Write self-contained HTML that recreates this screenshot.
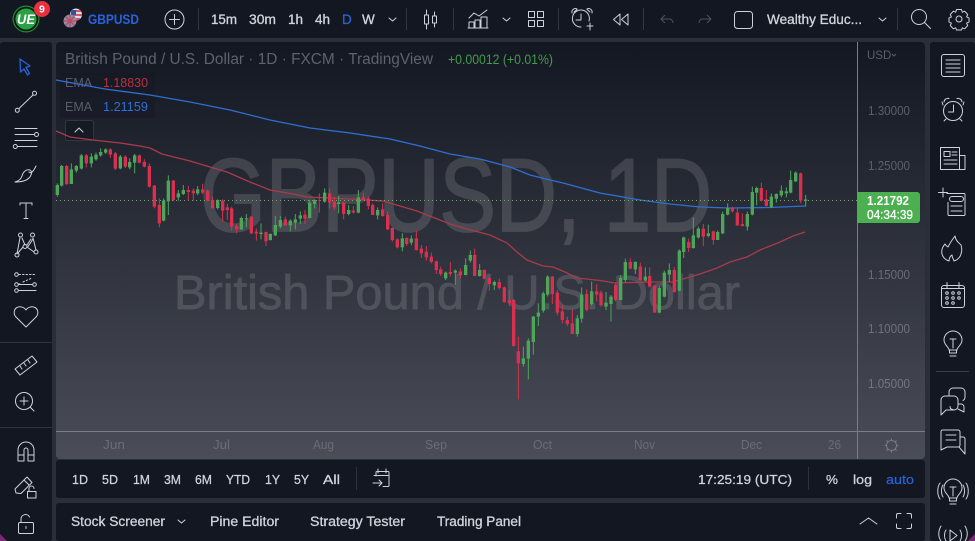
<!DOCTYPE html>
<html><head><meta charset="utf-8"><title>GBPUSD</title>
<style>
html,body{margin:0;padding:0;background:#2a2e39;width:975px;height:541px;overflow:hidden}
svg{display:block;font-family:"Liberation Sans",sans-serif}
.i{fill:none;stroke:#cfd2da;stroke-width:1;stroke-linecap:round;stroke-linejoin:round}
.t{fill:#d1d4dc;font-size:13.5px;stroke:#d1d4dc;stroke-width:.3}
.b{fill:#d1d4dc;font-size:13px;stroke:#d1d4dc;stroke-width:.25}
.p{fill:#5c5f69;font-size:12.5px}
.x{fill:#6a6d76;font-size:12.5px}
</style></head><body>
<svg width="975" height="541" viewBox="0 0 975 541" xmlns="http://www.w3.org/2000/svg">
<defs><linearGradient id="g" x1="0" y1="42" x2="0" y2="459" gradientUnits="userSpaceOnUse"><stop offset="0" stop-color="#131722"/><stop offset="1" stop-color="#4a4d57"/></linearGradient></defs>
<rect width="975" height="541" fill="#2a2e39"/>
<rect width="975" height="38" fill="#131722"/>
<rect x="0" y="42" width="52" height="499" rx="3" fill="#131722"/>
<rect x="930" y="42" width="45" height="499" rx="3" fill="#131722"/>
<rect x="56" y="42" width="869" height="417" rx="4" fill="url(#g)"/>
<rect x="56" y="460" width="869" height="38" rx="3" fill="#131722"/>
<rect x="56" y="503" width="869" height="38" rx="3" fill="#131722"/>

<!-- watermark -->
<g opacity=".13" fill="#fff" stroke="#fff">
<text x="200" y="231" font-size="104" stroke-width="1.800" textLength="512" lengthAdjust="spacingAndGlyphs">GBPUSD, 1D</text>
<text x="174" y="309" font-size="48" stroke-width=".8" textLength="566" lengthAdjust="spacingAndGlyphs">British Pound / U.S. Dollar</text>
</g>

<!-- legend -->
<text x="65" y="64" font-size="15.500" fill="#5f626c" textLength="368" lengthAdjust="spacingAndGlyphs">British Pound / U.S. Dollar · 1D · FXCM · TradingView</text>
<text x="448" y="64" font-size="13.500" fill="#44994c" textLength="105" lengthAdjust="spacingAndGlyphs">+0.00012 (+0.01%)</text>
<rect x="60" y="73" width="95" height="45" fill="#131722" fill-opacity=".35"/>
<text x="65" y="87" font-size="12.500" fill="#5a5d67">EMA</text>
<text x="103" y="87" font-size="13" fill="#b8303f" textLength="45" lengthAdjust="spacingAndGlyphs">1.18830</text>
<text x="65" y="111" font-size="12.500" fill="#5a5d67">EMA</text>
<text x="103" y="111" font-size="13" fill="#2f6fd0" textLength="45" lengthAdjust="spacingAndGlyphs">1.21159</text>
<rect x="65.500" y="120.500" width="28" height="20" rx="2" fill="#161a25" stroke="#33363f"/>
<path class="i" d="M75 132l4-4 4 4"/>

<!-- EMA lines -->
<path fill="none" stroke="#2f6fd0" stroke-width="1.300" d="M56 80L105 89L150 95L190 102L230 110L270 120L310 128L350 133L390 139L420 146L450 154L480 159L510 167L530 175L550 180L563 183L600 193L640 200L670 204L700 207L730 208L770 207.500L805 206"/>
<path fill="none" stroke="#a93a4a" stroke-width="1.300" d="M56 131L70 137L93 140L120 143L140 146L150 148L162 154L190 161L210 167L227 172L250 182L270 190L293 194L307 197L330 198L350 199L383 201L417 211L450 224L467 229L490 235L507 243L517 252L527 260L543 266L553 267L565 272L577 278L600 280.500L615 283L650 282L672 282L680 280L700 274L717 268L730 262L747 257L760 250L780 242L793 236L805 232"/>
<path stroke="#76a86a" stroke-width="1" stroke-dasharray="1 3" d="M56 200.500H857"/>

<!-- candles: coordinates in 3x crop space -->
<g fill="none">
<g transform="translate(50 130) scale(.33333)">
<path stroke="#4ca559" stroke-width="3" d="M22 160V200M35 105V170M64 100V162M79 105V128M94 72V118M124 70V112M138 68V92M152 55V80M167 55V72M211 75V118M239 85V118M254 72V130M341 205V274M355 136V255M385 180V212M400 165V195M443 168V195M503 208V238M574 260V300M589 252V292M633 280V328M661 310V332M676 258V318M691 258V295M721 268V304M736 252V298M751 244V282M779 210V265M794 208V235M824 175V218M866 198V250M896 225V256"/>
<path stroke="#4ca559" stroke-width="10" d="M22 165V195M35 108V167M64 118V162M79 108V122M94 76V116M124 80V100M138 74V88M152 66V76M167 58V68M211 80V115M239 96V112M254 76V98M341 212V272M355 152V214M385 190V202M400 180V192M443 178V190M503 210V234M574 264V298M589 265V268M633 308V312M661 312V330M676 285V316M691 270V290M721 272V286M736 268V278M751 256V266M779 218V264M794 210V222M824 188V215M866 218V222M896 240V252"/>
<path stroke="#d9304f" stroke-width="3" d="M50 105V165M109 72V112M181 55V84M196 66V120M226 76V114M268 74V100M283 88V112M298 100V172M313 165V235M328 205V292M370 150V214M415 168V212M430 175V212M458 162V192M473 178V214M488 200V235M518 208V275M532 222V270M545 230V302M560 282V310M604 258V312M619 296V332M648 305V348M706 260V288M765 240V282M808 190V248M839 175V235M853 200V240M881 215V268"/>
<path stroke="#d9304f" stroke-width="10" d="M50 108V162M109 76V100M181 58V74M196 70V116M226 80V110M268 76V98M283 96V110M298 108V170M313 167V230M328 225V280M370 152V210M415 180V186M430 182V190M458 178V188M473 182V212M488 210V235M518 212V242M532 232V240M545 235V290M560 288V298M604 260V310M619 305V310M648 306V334M706 268V286M765 254V266M808 210V212M839 190V218M853 214V232M881 218V252"/>
</g>
<g transform="translate(350 170) scale(.33333)">
<path stroke="#4ca559" stroke-width="3" d="M25 60V130M83 112V148M157 190V244M184 196V225M287 305V330M316 298V345M347 265V316M361 242V278M389 282V320M433 332V360M520 530V590M535 505V628M550 438V554M565 400V468M580 365V428M593 316V380M682 435V500M695 352V458M725 335V406"/>
<path stroke="#4ca559" stroke-width="10" d="M25 82V128M83 120V136M157 205V232M184 206V218M287 308V325M316 302V308M347 285V315M361 255V272M389 300V318M433 336V346M520 565V582M535 512V566M550 440V516M565 428V440M580 370V422M593 320V374M682 445V492M695 374V446M725 364V402"/>
<path stroke="#d9304f" stroke-width="3" d="M10 108V130M40 68V92M55 80V118M68 100V135M98 100V140M113 125V180M127 172V215M142 205V235M170 202V228M199 182V242M214 225V264M229 228V272M244 248V280M259 272V312M272 290V318M301 276V320M331 295V326M374 236V318M403 298V328M418 316V362M448 326V358M463 350V398M478 358V408M491 388V530M505 500V688M607 318V402M622 360V436M637 405V460M652 440V468M667 418V492M710 358V424M740 342V394"/>
<path stroke="#d9304f" stroke-width="10" d="M10 122V128M40 82V90M55 85V108M68 105V135M98 118V138M113 135V178M127 174V210M142 208V232M170 204V222M199 205V240M214 236V250M229 245V262M244 260V276M259 274V300M272 298V312M301 306V312M331 304V316M374 255V318M403 300V326M418 324V342M448 336V354M463 352V396M478 390V400M491 390V528M505 544V580M607 320V372M622 368V428M637 424V450M652 450V462M667 460V492M710 372V420M740 364V374"/>
</g>
<g transform="translate(600 160) scale(.33333)">
<path stroke="#4ca559" stroke-width="3" d="M18 396V450M33 405V485M62 345V420M76 296V366M106 304V342M136 322V364M178 380V460M193 332V412M208 310V366M238 268V394M251 230V294M280 172V266M295 200V236M325 194V232M353 212V240M368 155V222M383 130V166M442 155V212M457 80V166M470 80V136M514 100V144M529 100V128M544 76V112M559 82V112M572 32V100M587 34V66M617 105V140"/>
<path stroke="#4ca559" stroke-width="10" d="M18 428V440M33 410V432M62 354V420M76 306V360M106 306V328M136 350V362M178 384V458M193 338V410M208 330V344M238 272V392M251 232V276M280 226V264M295 206V232M325 220V228M353 216V240M368 162V220M383 144V164M442 162V200M457 96V164M470 84V98M514 110V142M529 102V116M544 92V106M559 94V100M572 60V98M587 38V64"/>
<path stroke="#4ca559" stroke-width="4" d="M612 120.500H622"/>
<path stroke="#d9304f" stroke-width="3" d="M3 392V440M47 368V424M91 295V328M121 308V362M149 322V382M164 376V458M223 322V398M266 236V276M310 192V258M340 212V254M397 140V158M412 142V198M427 160V200M484 68V124M499 90V140M602 38V130"/>
<path stroke="#d9304f" stroke-width="10" d="M3 398V436M47 375V420M91 306V326M121 320V360M149 348V380M164 378V458M223 330V396M266 246V264M310 206V230M340 214V240M397 144V154M412 158V196M427 192V198M484 84V122M499 118V138M602 40V122"/>
</g>
</g>

<!-- axes -->
<path stroke="#7a7d86" d="M857.500 42V459M56 431.500H925"/>
<text class="p" x="868" y="115" textLength="42" lengthAdjust="spacingAndGlyphs">1.30000</text>
<text class="p" x="868" y="170" textLength="42" lengthAdjust="spacingAndGlyphs">1.25000</text>
<text class="p" x="868" y="279" textLength="42" lengthAdjust="spacingAndGlyphs" style="fill:#696c75">1.15000</text>
<text class="p" x="868" y="333" textLength="42" lengthAdjust="spacingAndGlyphs" style="fill:#6e7179">1.10000</text>
<text class="p" x="868" y="388" textLength="42" lengthAdjust="spacingAndGlyphs" style="fill:#73767e">1.05000</text>
<text x="867" y="59" font-size="11.500" fill="#5c5f69">USD</text><path fill="none" stroke="#5c5f69" d="M892 54l2 2 2-2"/>
<path d="M857 192H917a3 3 0 0 1 3 3V220a3 3 0 0 1-3 3H857Z" fill="#4caf50"/>
<text x="867" y="205" font-size="12.500" font-weight="bold" fill="#fff" textLength="42" lengthAdjust="spacingAndGlyphs">1.21792</text>
<text x="867" y="219" font-size="12.500" fill="#fff" stroke="#fff" stroke-width=".3" textLength="46" lengthAdjust="spacingAndGlyphs">04:34:39</text>
<g class="x"><text x="103" y="449" textLength="22" lengthAdjust="spacingAndGlyphs">Jun</text><text x="213" y="449" textLength="17" lengthAdjust="spacingAndGlyphs">Jul</text><text x="313" y="449" textLength="21" lengthAdjust="spacingAndGlyphs">Aug</text><text x="425" y="449" textLength="22" lengthAdjust="spacingAndGlyphs">Sep</text><text x="533" y="449" textLength="19" lengthAdjust="spacingAndGlyphs">Oct</text><text x="634" y="449" textLength="21" lengthAdjust="spacingAndGlyphs">Nov</text><text x="741" y="449" textLength="21" lengthAdjust="spacingAndGlyphs">Dec</text><text x="828" y="449" textLength="13" lengthAdjust="spacingAndGlyphs">26</text></g>
<g fill="none" stroke="#787b84"><circle cx="891.500" cy="445.500" r="5"/><path d="M891.500 438.500v2M891.500 450.500v2M884.500 445.500h2M896.500 445.500h2M886.500 440.500l1.500 1.500M895 449l1.500 1.500M886.500 450.500l1.500-1.500M895 442l1.500-1.500"/></g>

<!-- logo -->
<circle cx="26" cy="19" r="13.500" fill="#1f8a3b"/><circle cx="26" cy="19" r="12.300" fill="#0f1a14"/><circle cx="26" cy="19" r="10.500" fill="#2aa144"/>
<text x="17" y="24" font-size="13.500" font-weight="bold" font-style="italic" fill="#fff" textLength="18" lengthAdjust="spacingAndGlyphs">UE</text>
<circle cx="42" cy="9" r="8" fill="#e8303f"/><text x="39" y="12.500" font-size="10.500" font-weight="bold" fill="#fff">9</text>
<!-- flags -->
<circle cx="76" cy="14.500" r="6" fill="#d8dce6"/><path d="M71 11H81M70 15H82M71 19H80" stroke="#c8303f" stroke-width="1.500"/><path d="M71 10h5v5h-5z" fill="#2c55a8"/>
<circle cx="70" cy="21" r="6.500" fill="#8a8fa8"/><path d="M64 21H76.500M70 15V27.500M65.500 16.500l9 9M74.500 16.500l-9 9" stroke="#c24a5c" stroke-width="1.300"/>
<text x="88" y="24" font-size="14" font-weight="bold" fill="#2962d8" textLength="51" lengthAdjust="spacingAndGlyphs">GBPUSD</text>

<!-- top bar -->
<circle class="i" cx="174.500" cy="19.500" r="9.500"/><path class="i" d="M174.500 14.500v10M169.500 19.500h10"/>
<path stroke="#333742" d="M198.500 8v22M406.500 8v22M453.500 8v22M558.500 8v22M643.500 8v22M897.500 8v22"/>
<text class="t" x="211" y="24" textLength="26" lengthAdjust="spacingAndGlyphs">15m</text><text class="t" x="249" y="24" textLength="27" lengthAdjust="spacingAndGlyphs">30m</text><text class="t" x="288" y="24" textLength="15" lengthAdjust="spacingAndGlyphs">1h</text><text class="t" x="315" y="24" textLength="15" lengthAdjust="spacingAndGlyphs">4h</text>
<text class="t" x="342" y="24" style="fill:#2962d8;stroke:#2962d8">D</text><text class="t" x="362" y="24">W</text>
<path class="i" d="M389 18l3.500 3 3.500-3M503 18l3.500 3 3.500-3M879 18l3.500 3 3.500-3"/>
<path class="i" d="M426.500 10v5M426.500 24v5M424.500 15h4v9h-4zM434.500 12v4M434.500 23v4M432.500 16h4v7h-4z" />
<path class="i" d="M469 18l5-5 5 3 8-6M469 28v-6h5v6M475 28v-8h5v8M481 28v-11h6v11M468 28h20"/>
<path class="i" d="M528.500 11.500h6v6h-6zM537.500 11.500h6v6h-6zM528.500 20.500h6v6h-6zM537.500 20.500h6v6h-6z"/>
<path class="i" d="M589 21a8.500 8.500 0 1 0-8 6M581 14v6h-5M574 12l3-2.500M590 12l-3-2.500M572 13a3.500 3.500 0 0 1 5-4M592 13a3.500 3.500 0 0 0-5-4M587 26h6M590 23v7"/>
<path class="i" d="M620 14l-6.500 5.500 6.500 5.500zM628 14l-6.500 5.500 6.500 5.500z"/>
<path fill="none" stroke="#4e525c" d="M665 15l-4 4 4 4M661 19h9a4 4 0 0 1 3 4M707 15l4 4-4 4M711 19h-9a4 4 0 0 0-3 4"/>
<rect class="i" x="734.500" y="11.500" width="18" height="17" rx="3"/>
<text class="t" x="767" y="24" textLength="95" lengthAdjust="spacingAndGlyphs">Wealthy Educ...</text>
<circle class="i" cx="919" cy="17" r="7.500"/><path class="i" d="M924.500 22.500l6 6"/>
<circle class="i" cx="959" cy="19" r="3"/><path class="i" d="M956.500 9.500h5l.8 2.700 2.400-1 3 3.300-1.100 2.400 2.400 1v4.200l-2.400 1 1.100 2.400-3 3.300-2.400-1-.8 2.200h-5l-.8-2.200-2.400 1-3-3.300 1.100-2.400-2.400-1v-4.200l2.400-1-1.100-2.400 3-3.300 2.400 1z"/>

<!-- left toolbar -->
<path fill="none" stroke="#2962d8" stroke-width="1.300" stroke-linejoin="round" d="M20 59l10 7-4 1.500 3.500 6-2 1.500-3.500-6-3.500 3z"/>
<circle class="i" cx="34.500" cy="93.300" r="2"/><circle class="i" cx="17.300" cy="110.300" r="2"/><path class="i" d="M33 95L19 108.500"/>
<path class="i" d="M15 128.500H37M15 134.500H34.500M15 140.500H37M17.500 146.500H37"/><circle class="i" cx="36.500" cy="134.500" r="2"/><circle class="i" cx="15.300" cy="146.500" r="2"/>
<path class="i" d="M15 182c4-1 6-3 7-6 1-4 4-7 8-6 3 2 1 6-1 8-3 3-8 4-14 4zM29 172c2 2 4 0 7-6"/>
<path class="i" d="M20 203h12M26 203v15M24 218.500h4M20 203v2M32 203v2"/>
<path class="i" d="M20 237.500L17 254M22 238L25 245M31 239L27 245M33 238L36 250M28 246.500L33 239M23 247L18 253M27 247L34 252"/><circle class="i" cx="20.500" cy="235" r="2"/><circle class="i" cx="32.500" cy="235" r="2"/><circle class="i" cx="25" cy="246.500" r="2"/><circle class="i" cx="17" cy="255" r="2"/><circle class="i" cx="36" cy="252" r="2"/>
<circle class="i" cx="16.500" cy="274.500" r="1.800"/><circle class="i" cx="16.500" cy="284.500" r="1.800"/><circle class="i" cx="16.500" cy="290.500" r="1.800"/><circle class="i" cx="34.500" cy="284.500" r="1.800"/>
<path class="i" d="M19 274.500H36M19 284h1M23 282l9-4" stroke-dasharray="1.500 2"/><path class="i" d="M19 290.500H36M19 284.500H32"/>
<path class="i" d="M26 327l-10-10c-3-3-2-8 1-9.500 3-1.500 7-.5 9 2.500 2-3 6-4 9-2.500 3 1.500 4 6.500 1 9.500z"/>
<path stroke="#2e323d" d="M0 342.500H52M0 427.500H52"/>
<path class="i" d="M15 369l17-13 5 6-17 13zM20 366l2 3M24 363l2 3M28 360l2 3"/>
<circle class="i" cx="24" cy="401" r="8.500"/><path class="i" d="M24 397v8M20 401h8M30 407l4 4"/>
<path class="i" d="M18 461v-11a8 8 0 0 1 16 0v11h-6v-11a2 2 0 0 0-4 0v11zM18 455h6M28 455h6"/>
<path class="i" d="M15 489l1 4 5 .5 11-11-5-5.500zM24 480l5 5"/><rect class="i" x="27.500" y="491.500" width="8.500" height="6.500" fill="#131722"/><path class="i" d="M29 491v-2.500a2.500 2.500 0 0 1 5 0"/>
<rect class="i" x="18.500" y="522.500" width="15" height="11" rx="1.500"/><path class="i" d="M21 522v-3a4.500 4.500 0 0 1 8.500-2M26 526.500v2"/>

<!-- right toolbar -->
<rect class="i" x="941.500" y="54.500" width="23" height="22" rx="2.500"/><path class="i" d="M946 60h14M946 64h14M946 68h14M946 72h14"/>
<circle class="i" cx="953" cy="111" r="9.500"/><path class="i" d="M953.500 105v7h-5M944 102a4 4 0 0 1 5-3.500M962 102a4 4 0 0 0-5-3.500M946 119l-2 2M960 119l2 2M943 105l-1-3M963 105l1-3"/>
<path class="i" d="M940.500 147.500h19v22h-19zM959.500 155.500h5.500v14h-5.500zM944 151.500h6v5h-6zM952 152h5M952 155h5M944 160h13M944 164h13"/>
<path class="i" d="M947 193.500h17a1 1 0 0 1 1 1v20a1 1 0 0 1-1 1h-15a1 1 0 0 1-1-1v-12M952 196.500h9a1.500 1.500 0 0 1 0 5h-9a1.500 1.500 0 0 1 0-5zM951 206h11M951 211h11M943 188v9M938.500 192.500h9"/>
<path class="i" d="M955 236c1 5 3 6 6 9 1 3 1 6 0 9-1 4-4 6-7 7-1-3-2-4-2-6-2 1-3 4-3 6-3-1-6-3-7-7-1-4 1-8 3-10 1 2 2 2 3 3 2-4 4-7 7-11z"/>
<rect class="i" x="941.500" y="285.500" width="23" height="22" rx="2.500"/><path class="i" d="M947 282.500v6M959 282.500v6M941.500 288.500h23"/><g class="i"><circle cx="947" cy="293" r="1.300"/><circle cx="953" cy="293" r="1.300"/><circle cx="959" cy="293" r="1.300"/><circle cx="947" cy="298" r="1.300"/><circle cx="953" cy="298" r="1.300"/><circle cx="959" cy="298" r="1.300"/><circle cx="947" cy="303" r="1.300"/><circle cx="953" cy="303" r="1.300"/></g>
<path class="i" d="M949 350c0-3-5-5-5-10a9 9 0 0 1 18 0c0 5-5 7-5 10zM949.500 350v3h7v-3M950 356h6M950 339h6M953 339v9"/>
<path stroke="#3a3e49" d="M936 371.500H969"/>
<path class="i" d="M941 415V400a4 4 0 0 1 4-4h9a4 4 0 0 1 4 4v6a4 4 0 0 1-4 4h-8zM949 396v-4a4 4 0 0 1 4-4h8a4 4 0 0 1 4 4v5a4 4 0 0 1-2 3.500M950 406.500c0 2 1 3 3 3M958 404h3a3 3 0 0 1 3 3v5l-6-3"/>
<path class="i" d="M942 430h16a2 2 0 0 1 2 2v13a2 2 0 0 1-2 2h-11l-6 3v-18a2 2 0 0 1 1-2zM946 435h10M946 440h10M960 437h3a2 2 0 0 1 2 2v15l-6-7"/>
<path class="i" d="M949 498c0-3-5-5-5-10a9 9 0 0 1 18 0c0 5-5 7-5 10zM949.500 498v3h7v-3M950 504h6M950 487h6M953 487v9M940 483c-3 4-3 12 0 16M943 485c-2 3-2 9 0 12M966 483c3 4 3 12 0 16M963 485c2 3 2 9 0 12"/>
<path class="i" d="M950 530l7 5.500-7 5.500zM946 530c-2 3-2 8 0 11M960 530c2 3 2 8 0 11M941 526c-3 5-3 11 0 15M965 526c3 5 3 11 0 15"/>
<path d="M968 541l7-7v7z" fill="#7c2a78"/><path d="M0 534l7 7H0z" fill="#7c2a78"/>

<!-- range bar -->
<g class="b"><text x="72" y="484" textLength="16" lengthAdjust="spacingAndGlyphs">1D</text><text x="102" y="484" textLength="16" lengthAdjust="spacingAndGlyphs">5D</text><text x="133" y="484" textLength="17" lengthAdjust="spacingAndGlyphs">1M</text><text x="164" y="484" textLength="17" lengthAdjust="spacingAndGlyphs">3M</text><text x="195" y="484" textLength="17" lengthAdjust="spacingAndGlyphs">6M</text><text x="226" y="484" textLength="24" lengthAdjust="spacingAndGlyphs">YTD</text><text x="265" y="484" textLength="15" lengthAdjust="spacingAndGlyphs">1Y</text><text x="294" y="484" textLength="15" lengthAdjust="spacingAndGlyphs">5Y</text><text x="323" y="484" textLength="17" lengthAdjust="spacingAndGlyphs">All</text>
<text x="698" y="484" textLength="94" lengthAdjust="spacingAndGlyphs">17:25:19 (UTC)</text><text x="826" y="484" textLength="12" lengthAdjust="spacingAndGlyphs">%</text><text x="853" y="484" textLength="19" lengthAdjust="spacingAndGlyphs">log</text><text x="886" y="484" textLength="28" lengthAdjust="spacingAndGlyphs" style="fill:#2962d8;stroke:#2962d8">auto</text></g>
<path stroke="#2e323d" d="M356.500 467v23M808.500 467v23"/>
<path class="i" d="M376 476v-3.500a1 1 0 0 1 1-1h11a1 1 0 0 1 1 1v13a1 1 0 0 1-1 1h-5M374 475.500h15M378 469v4M386 469v4M373 483h9M379 480l3 3-3 3"/>

<!-- bottom tabs -->
<g class="t"><text x="71" y="526" textLength="94" lengthAdjust="spacingAndGlyphs">Stock Screener</text><text x="210" y="526" textLength="69" lengthAdjust="spacingAndGlyphs">Pine Editor</text><text x="310" y="526" textLength="95" lengthAdjust="spacingAndGlyphs">Strategy Tester</text><text x="437" y="526" textLength="84" lengthAdjust="spacingAndGlyphs">Trading Panel</text></g>
<path class="i" d="M178 520l3.500 3 3.500-3M860 524l8.500-6 8.500 6"/>
<path class="i" d="M896.500 518v-3a1.500 1.500 0 0 1 1.500-1.500h3M907 513.500h3a1.500 1.500 0 0 1 1.500 1.500v3M911.500 524v3a1.500 1.500 0 0 1-1.500 1.500h-3M901 528.500h-3a1.500 1.500 0 0 1-1.500-1.500v-3"/>
</svg>
</body></html>
